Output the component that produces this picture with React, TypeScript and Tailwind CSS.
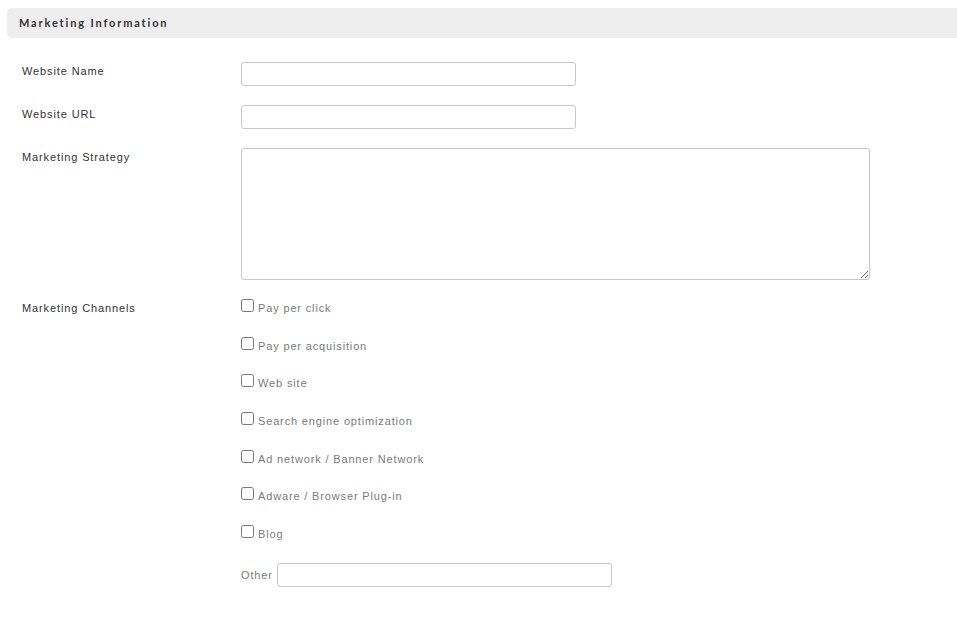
const channels = [
  'Pay per click',
  'Pay per acquisition',
  'Web site',
  'Search engine optimization',
  'Ad network / Banner Network',
  'Adware / Browser Plug-in',
  'Blog',
];

export default function App() {
  return (
    <div className="w-[957px] h-[620px] bg-white overflow-hidden font-['Liberation_Sans',Arial,sans-serif]">
      {/* Section header */}
      <div className="pt-2 pl-[7px]">
        <div className="h-[30px] bg-[#eeeeee] rounded-l-[5px] flex items-center pl-3">
          <h2 className="font-['Lato',sans-serif] font-bold text-[11px] tracking-[1.85px] text-[#333]">
            Marketing Information
          </h2>
        </div>
      </div>

      <div className="pl-[22px] pt-6 text-[11px] tracking-[0.88px] text-[#333]">
        {/* Website Name */}
        <div className="flex mb-[19px]">
          <label className="w-[219px] pt-[1px]">Website Name</label>
          <input type="text" className="w-[335px] h-[24px] border border-[#c8c8c8] rounded-[3px] outline-none" />
        </div>

        {/* Website URL */}
        <div className="flex mb-[19px]">
          <label className="w-[219px] pt-[1px]">Website URL</label>
          <input type="text" className="w-[335px] h-[24px] border border-[#c8c8c8] rounded-[3px] outline-none" />
        </div>

        {/* Marketing Strategy */}
        <div className="flex mb-[19px]">
          <label className="w-[219px] pt-[1px]">Marketing Strategy</label>
          <textarea className="w-[629px] h-[132px] border border-[#c8c8c8] rounded-[3px] outline-none resize" />
        </div>

        {/* Marketing Channels */}
        <div className="flex">
          <label className="w-[219px] pt-[1px]">Marketing Channels</label>
          <div className="flex flex-col text-[#7a7a7a] tracking-[0.85px]">
            {channels.map((c) => (
              <label key={c} className="flex items-start h-[37.7px]">
                <input type="checkbox" className="w-[13px] h-[13px] m-0 mr-[4px]" />
                <span className="pt-[2px] leading-[14px]">{c}</span>
              </label>
            ))}
            <div className="flex items-center mt-[0px]">
              <span className="mr-[4px] pt-[1px]">Other</span>
              <input type="text" className="w-[335px] h-[24px] border border-[#c8c8c8] rounded-[3px] outline-none" />
            </div>
          </div>
        </div>
      </div>
    </div>
  );
}
